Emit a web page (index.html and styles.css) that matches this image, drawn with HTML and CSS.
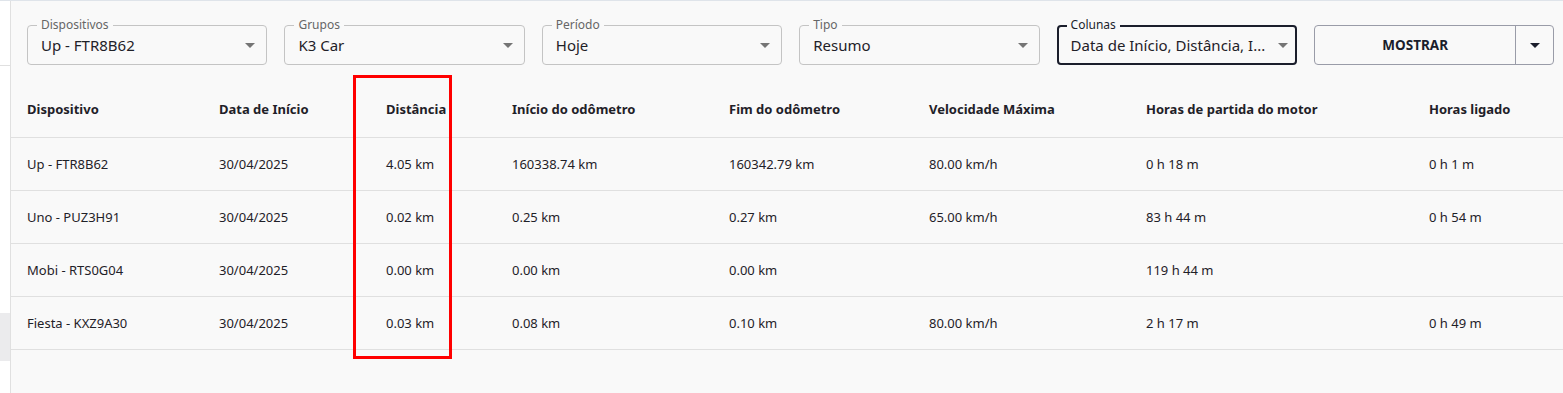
FILE: index.html
```html
<!DOCTYPE html>
<html lang="pt-BR">
<head>
    <meta charset="UTF-8">
    <meta name="viewport" content="width=device-width, initial-scale=1.0">
    <title>Relatório - Resumo</title>
    <link rel="stylesheet" href="styles.css">
</head>
<body>
    <div class="layout">
        <aside class="side-strip">
            <div class="side-head"></div>
            <div class="side-item"></div>
        </aside>

        <main class="report">
            <div class="filters">
                <div class="filter">
                    <span class="filter-label">Dispositivos</span>
                    <span class="filter-value">Up - FTR8B62</span>
                    <svg class="caret" viewBox="0 0 24 24"><path d="M7 10l5 5 5-5z"/></svg>
                </div>
                <div class="filter">
                    <span class="filter-label">Grupos</span>
                    <span class="filter-value">K3 Car</span>
                    <svg class="caret" viewBox="0 0 24 24"><path d="M7 10l5 5 5-5z"/></svg>
                </div>
                <div class="filter">
                    <span class="filter-label">Período</span>
                    <span class="filter-value">Hoje</span>
                    <svg class="caret" viewBox="0 0 24 24"><path d="M7 10l5 5 5-5z"/></svg>
                </div>
                <div class="filter">
                    <span class="filter-label">Tipo</span>
                    <span class="filter-value">Resumo</span>
                    <svg class="caret" viewBox="0 0 24 24"><path d="M7 10l5 5 5-5z"/></svg>
                </div>
                <div class="filter focused">
                    <span class="filter-label">Colunas</span>
                    <span class="filter-value">Data de Início, Distância, I...</span>
                    <svg class="caret" viewBox="0 0 24 24"><path d="M7 10l5 5 5-5z"/></svg>
                </div>
                <div class="split-btn">
                    <button class="show-btn">MOSTRAR</button>
                    <button class="menu-btn"><svg viewBox="0 0 24 24"><path d="M7 10l5 5 5-5z"/></svg></button>
                </div>
            </div>

            <table class="summary">
                <colgroup>
                    <col style="width: 192px">
                    <col style="width: 167px">
                    <col style="width: 126px">
                    <col style="width: 217px">
                    <col style="width: 200px">
                    <col style="width: 217px">
                    <col style="width: 283px">
                    <col>
                </colgroup>
                <thead>
                    <tr>
                        <th>Dispositivo</th>
                        <th>Data de Início</th>
                        <th>Distância</th>
                        <th>Início do odômetro</th>
                        <th>Fim do odômetro</th>
                        <th>Velocidade Máxima</th>
                        <th>Horas de partida do motor</th>
                        <th>Horas ligado</th>
                    </tr>
                </thead>
                <tbody>
                    <tr>
                        <td>Up - FTR8B62</td>
                        <td>30/04/2025</td>
                        <td>4.05 km</td>
                        <td>160338.74 km</td>
                        <td>160342.79 km</td>
                        <td>80.00 km/h</td>
                        <td>0 h 18 m</td>
                        <td>0 h 1 m</td>
                    </tr>
                    <tr>
                        <td>Uno - PUZ3H91</td>
                        <td>30/04/2025</td>
                        <td>0.02 km</td>
                        <td>0.25 km</td>
                        <td>0.27 km</td>
                        <td>65.00 km/h</td>
                        <td>83 h 44 m</td>
                        <td>0 h 54 m</td>
                    </tr>
                    <tr>
                        <td>Mobi - RTS0G04</td>
                        <td>30/04/2025</td>
                        <td>0.00 km</td>
                        <td>0.00 km</td>
                        <td>0.00 km</td>
                        <td></td>
                        <td>119 h 44 m</td>
                        <td></td>
                    </tr>
                    <tr>
                        <td>Fiesta - KXZ9A30</td>
                        <td>30/04/2025</td>
                        <td>0.03 km</td>
                        <td>0.08 km</td>
                        <td>0.10 km</td>
                        <td>80.00 km/h</td>
                        <td>2 h 17 m</td>
                        <td>0 h 49 m</td>
                    </tr>
                </tbody>
            </table>

            <!-- destaque da coluna Distância -->
            <div class="highlight"></div>
        </main>
    </div>
</body>
</html>
```

FILE: styles.css
```css
html, body {
    height: 100%;
}
body {
    margin: 0;
    font-family: "Noto Sans", "Open Sans", Arial, sans-serif;
    color: #1f2128;
    background: #f9f9f9;
    border-top: 1px solid #dfe4ea;
    box-sizing: border-box;
}
.layout {
    display: flex;
    height: 100%;
}
.side-strip {
    width: 10px;
    background: #fff;
    border-right: 1px solid #e0e0e0;
    flex-shrink: 0;
}
.side-head {
    height: 64px;
    border-bottom: 1px solid #e0e0e0;
}
.side-item {
    margin-top: 247px;
    height: 48px;
    background: #ebebed;
}
.report {
    flex: 1;
    position: relative;
    background: #f9f9f9;
}
.filters {
    display: flex;
    gap: 17px;
    padding: 24px 16px 0 16px;
}
.filter {
    position: relative;
    width: 240.4px;
    height: 40px;
    box-sizing: border-box;
    border: 1px solid #c4c4c4;
    border-radius: 4px;
    padding: 0 4px 0 13px;
    display: flex;
    align-items: center;
    gap: 6px;
}
.filter.focused {
    border: 2px solid #1b1e2c;
    padding: 0 3px 0 12px;
}
.filter-label {
    position: absolute;
    top: -9px;
    left: 9px;
    padding: 0 4px;
    font-size: 12px;
    line-height: 16px;
    color: #666;
    background: #f9f9f9;
}
.filter.focused .filter-label {
    top: -10px;
    left: 8px;
    color: #1b1e2c;
}
.filter-value {
    flex: 1;
    font-size: 15px;
    color: #1f2128;
    white-space: nowrap;
}
.caret {
    width: 24px;
    height: 24px;
    fill: #757575;
    flex-shrink: 0;
}
.split-btn {
    display: flex;
    width: 240.4px;
    height: 40px;
    box-sizing: border-box;
    border: 1px solid #9a9ca8;
    border-radius: 4px;
}
.show-btn {
    flex: 1;
    background: transparent;
    border: none;
    border-right: 1px solid #9a9ca8;
    font-family: inherit;
    font-weight: bold;
    font-size: 13.5px;
    color: #1b1e2c;
    cursor: pointer;
}
.menu-btn {
    width: 37px;
    background: transparent;
    border: none;
    padding: 0;
    display: flex;
    align-items: center;
    justify-content: center;
    cursor: pointer;
}
.menu-btn svg {
    width: 24px;
    height: 24px;
    fill: #1b1e2c;
}
.summary {
    margin-top: 16px;
    width: 100%;
    table-layout: fixed;
    border-collapse: collapse;
    font-size: 13px;
}
.summary th {
    height: 56px;
    text-align: left;
    font-weight: bold;
    padding: 0 0 0 16px;
    border-bottom: 1px solid #e0e0e0;
    white-space: nowrap;
}
.summary td {
    height: 52px;
    padding: 0 0 0 16px;
    border-bottom: 1px solid #e0e0e0;
    white-space: nowrap;
}
.highlight {
    position: absolute;
    left: 342px;
    top: 74px;
    width: 99px;
    height: 284px;
    box-sizing: border-box;
    border: 3px solid #ff0000;
}
```
